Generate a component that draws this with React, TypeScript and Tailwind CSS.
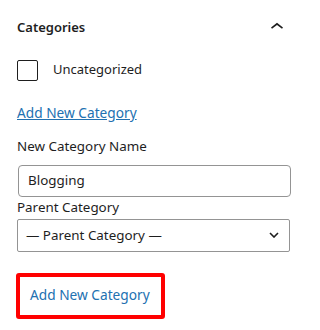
import React from "react";

export default function App() {
  return (
    <div className="w-[304px] h-[330px] bg-white text-[#1e1e1e] font-['Noto_Sans',sans-serif] text-[13px] overflow-hidden">
      <div className="pl-[17px] pr-[14px]">
        <div className="flex items-center justify-between h-[54px] pt-[2px]">
          <h2 className="font-semibold text-[13px]">Categories</h2>
          <svg width="24" height="24" viewBox="0 0 24 24" className="mr-[1px] mt-[-2px]">
            <path d="M6 12.6L12 7.8l6 4.8-1 1.2L12 9.9l-5 3.9-1-1.2z" fill="#1e1e1e" />
          </svg>
        </div>
        <div className="flex items-center h-[22px] mt-[5px]">
          <span className="w-[21px] h-[21px] border-[1.5px] border-[#1e1e1e] rounded-[2px] shrink-0" />
          <span className="ml-[15px]">Uncategorized</span>
        </div>
        <div className="mt-[22px]">
          <a className="text-[#2271b1] underline leading-[20px] text-[13.7px]">Add New Category</a>
        </div>
        <div className="mt-[12px] leading-[20px] text-[13.4px]">New Category Name</div>
        <div className="mt-[9px] mr-[-1px] ml-[1px] h-[32px] border border-[#949494] rounded-[4px] flex items-center pl-[9px] text-[13.4px]">
          Blogging
        </div>
        <div className="leading-[20px] mt-[0px] text-[13.4px]">Parent Category</div>
        <div className="mt-[2px] h-[33px] border border-[#949494] rounded-[2px] flex items-center justify-between pl-[8px] pr-[10px] text-[13.4px]">
          <span>— Parent Category —</span>
          <svg width="10" height="6" viewBox="0 0 10 6">
            <path d="M1 1l4 4 4-4" fill="none" stroke="#1e1e1e" strokeWidth="1.6" />
          </svg>
        </div>
        <div className="mt-[21px] ml-[-1px] w-[149px] h-[46px] border-[4px] border-[#ff0000] rounded-[3px] flex items-center pl-[10px]">
          <span className="text-[#2271b1] text-[13.7px]">Add New Category</span>
        </div>
      </div>
    </div>
  );
}
